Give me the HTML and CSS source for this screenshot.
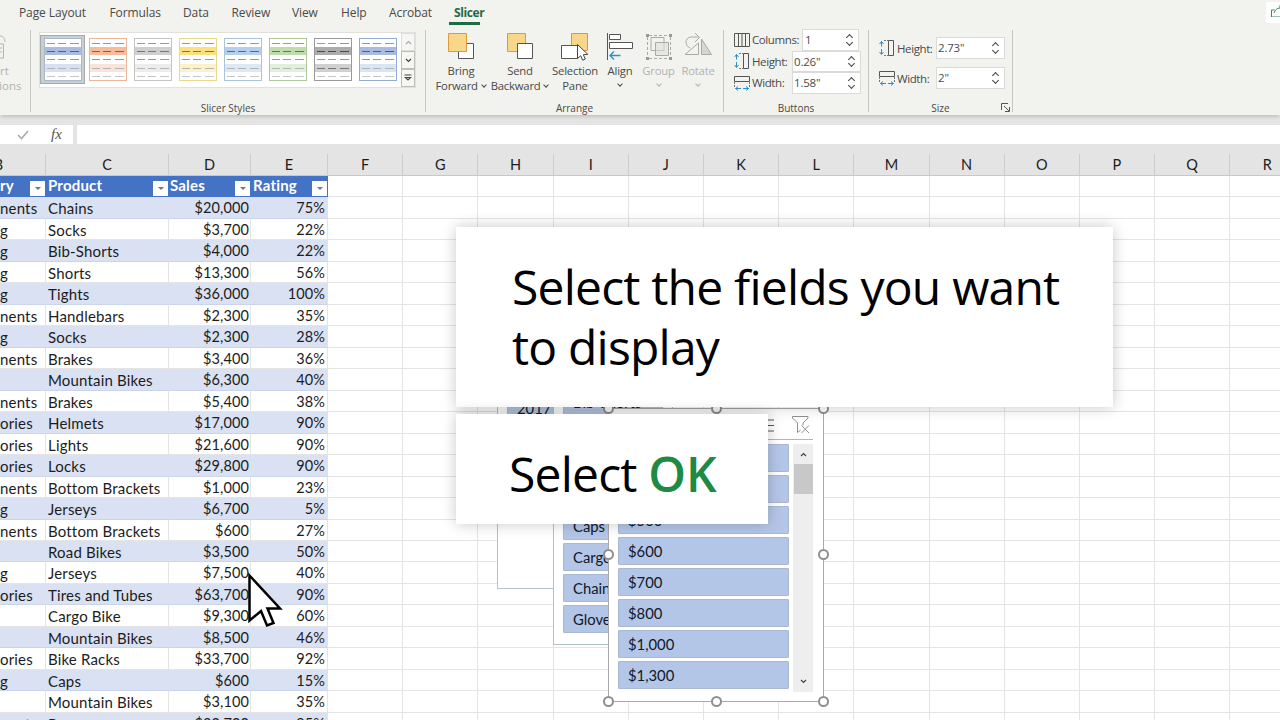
FILE: index.html
```html
<!DOCTYPE html>
<html lang="en">
<head>
  <meta charset="UTF-8" />
  <title>Slicer</title>
  <link rel="stylesheet" href="styles.css">
</head>
<body>
<div class="app">

  <!-- TABS -->
  <nav class="tabs">
    <span>Page Layout</span>
    <span>Formulas</span>
    <span>Data</span>
    <span>Review</span>
    <span>View</span>
    <span>Help</span>
    <span>Acrobat</span>
    <span class="active">Slicer</span>
    <div class="share">
      <svg width="12" height="14" viewBox="0 0 12 14" fill="none" stroke="#3c8565" stroke-width="1"><path d="M3.5 7H.5v7h11M3 10c1-3 3-5 6-5V2.500l3 3"/></svg>
    </div>
  </nav>

  <!-- RIBBON -->
  <div class="ribbon">
    <div class="group group-cut">
      <svg width="6" height="26" viewBox="0 0 6 26" fill="none" stroke="#b3b3b0"><path d="M0 2c3 0 5 2 5 6M0 10h3.500v14H0M0 14h2M0 18h2"/></svg>
      <span>rt</span>
      <span>tions</span>
    </div>

    <div class="group group-styles">
      <div class="gallery">
        <div class="thumbs" id="thumbs"></div>
        <div class="scroll">
          <div class="off"><svg width="7" height="5" viewBox="0 0 7 5"><path d="M1 4l2.500-2.500L6 4"/></svg></div>
          <div><svg width="7" height="5" viewBox="0 0 7 5"><path d="M1 1l2.500 2.500L6 1"/></svg></div>
          <div><svg width="8" height="8" viewBox="0 0 8 8"><path d="M.5 1h7M1.500 3.500L4 6l2.500-2.500z"/></svg></div>
        </div>
      </div>
      <div class="label">Slicer Styles</div>
    </div>

    <div class="group group-arrange">
      <div class="tools">
        <div class="tool">
          <svg width="30" height="30" viewBox="0 0 30 30"><path d="M12.500 11.500h15v15h-15z" fill="#fff" stroke="#555"/><path d="M2.500 1.500h18v18h-18z" fill="#f8d68a" stroke="#dc9a3c"/></svg>
          <span>Bring</span>
          <span>Forward <i class="caret"></i></span>
        </div>
        <div class="tool">
          <svg width="30" height="30" viewBox="0 0 30 30"><path d="M2.500 1.500h18v18h-18z" fill="#f8d68a" stroke="#dc9a3c"/><path d="M12.500 11.500h15v15h-15z" fill="#fff" stroke="#555"/></svg>
          <span>Send</span>
          <span>Backward <i class="caret"></i></span>
        </div>
        <div class="tool">
          <svg width="30" height="30" viewBox="0 0 30 30"><path d="M11.500 1.500h16v17h-16z" fill="#f8d68a" stroke="#dc9a3c"/><path d="M1.500 13.500h16v13h-16z" fill="#fff" stroke="#555"/><path d="M17.500 12.500v14l3.200-2.800 2 4.500 2.600-1.200-2-4.300 4.500-.4z" fill="#fff" stroke="#444"/></svg>
          <span>Selection</span>
          <span>Pane</span>
        </div>
        <div class="tool">
          <svg width="30" height="30" viewBox="0 0 30 30" fill="none" stroke="#555"><path d="M2.500 1v27"/><path d="M4.500 2.500h11v5h-11zM4.500 10.500h23v6h-23z" fill="#fff"/><path d="M15.500 23.500H5M9 19.500l-4 4 4 4" stroke="#2f8fc8" stroke-width="1.300"/></svg>
          <span>Align</span>
          <i class="caret"></i>
        </div>
        <div class="tool off">
          <svg width="30" height="30" viewBox="0 0 30 30" fill="none" stroke="#a9a9a9"><path d="M5 3.500h20M5 26.500h20M3.500 5v20M26.500 5v20" stroke-dasharray="3 2"/><path d="M7 5.500h13v13H7z"/><path d="M11.500 10.500h13v13h-13z" fill="#dededc" fill-opacity=".6"/><path d="M2 2h3v3H2zM25 2h3v3h-3zM2 25h3v3H2zM25 25h3v3h-3z" fill="#999" stroke="none"/></svg>
          <span>Group</span>
          <i class="caret"></i>
        </div>
        <div class="tool off">
          <svg width="30" height="30" viewBox="0 0 30 30" fill="none" stroke="#a9a9a9"><path d="M7 16C2 14 1 6 8 5h8M12 1l4.500 4.500L12 10"/><path d="M2 22.500L15.500 11v11.500z"/><path d="M18.500 7v15.500h10z" fill="#d6d6d4"/></svg>
          <span>Rotate</span>
          <i class="caret"></i>
        </div>
      </div>
      <div class="label">Arrange</div>
    </div>

    <div class="group group-buttons">
      <div class="field">
        <svg width="16" height="14" viewBox="0 0 16 14" fill="none" stroke="#555"><path d="M.5.5h15v13H.5zM4.500.5v13M8 .5v13M11.500.5v13"/></svg>
        <label>Columns:</label><div class="spin narrow">1<b></b></div>
      </div>
      <div class="field">
        <svg width="16" height="16" viewBox="0 0 16 16" fill="none"><path d="M9.500.5h5v15h-5z" stroke="#555"/><path d="M5 .5h5M5 15.500h5" stroke="#777" stroke-dasharray="2 1"/><path d="M2.500 1.500v5M.5 4l2-2.500 2 2.500M2.500 9v5M.5 12l2 2.500 2-2.500" stroke="#2f8fc8"/></svg>
        <label>Height:</label><div class="spin">0.26"<b></b></div>
      </div>
      <div class="field">
        <svg width="16" height="16" viewBox="0 0 16 16" fill="none"><path d="M.5 1.500h15v5H.5z" stroke="#555"/><path d="M.5 7v5M15.500 7v5" stroke="#777" stroke-dasharray="2 1"/><path d="M1.500 13.500H7M4 11.500l-2.500 2L4 15.500M9 13.500h5.500M12 11.500l2.500 2-2.500 2" stroke="#2f8fc8"/></svg>
        <label>Width:</label><div class="spin">1.58"<b></b></div>
      </div>
      <div class="label">Buttons</div>
    </div>

    <div class="group group-size">
      <div class="field">
        <svg width="16" height="16" viewBox="0 0 16 16" fill="none"><path d="M9.500.5h5v15h-5z" stroke="#555"/><path d="M5 .5h5M5 15.500h5" stroke="#777" stroke-dasharray="2 1"/><path d="M2.500 1.500v5M.5 4l2-2.500 2 2.500M2.500 9v5M.5 12l2 2.500 2-2.500" stroke="#2f8fc8"/></svg>
        <label>Height:</label><div class="spin">2.73"<b></b></div>
      </div>
      <div class="field">
        <svg width="16" height="16" viewBox="0 0 16 16" fill="none"><path d="M.5 1.500h15v5H.5z" stroke="#555"/><path d="M.5 7v5M15.500 7v5" stroke="#777" stroke-dasharray="2 1"/><path d="M1.500 13.500H7M4 11.500l-2.500 2L4 15.500M9 13.500h5.500M12 11.500l2.500 2-2.500 2" stroke="#2f8fc8"/></svg>
        <label>Width:</label><div class="spin">2"<b></b></div>
      </div>
      <div class="label">Size</div>
      <svg class="launcher" width="9" height="9" viewBox="0 0 9 9" fill="none" stroke="#555"><path d="M.5 7V.5H7M3 3l5 5M8.500 4v4.500H4"/></svg>
    </div>
  </div>

  <!-- FORMULA BAR -->
  <div class="formula">
    <div class="formula-tools">
      <svg width="12" height="10" viewBox="0 0 12 10" fill="none" stroke="#aaa" stroke-width="1.600"><path d="M1 5l3.500 3.500L11 1"/></svg>
      <span class="fx">fx</span>
    </div>
    <div class="formula-input"></div>
  </div>

  <!-- SHEET -->
  <div class="sheet">
    <div class="row letters" id="letters"></div>
    <div id="rows"></div>
  </div>

  <!-- SLICERS -->
  <div class="slicer slicer-year">
    <div class="item">2017</div>
  </div>
  <div class="slicer slicer-product">
    <div class="item">Bib-Shorts</div>
    <div class="item"></div>
    <div class="item"></div>
    <div class="item"></div>
    <div class="item">Caps</div>
    <div class="item">Cargo Bike</div>
    <div class="item">Chains</div>
    <div class="item">Gloves</div>
  </div>
  <div class="slicer slicer-sales">
    <div class="slicer-head">
      <svg width="14" height="14" viewBox="0 0 14 14" fill="none" stroke="#555" stroke-width="1.200"><path d="M0 2h13M0 7.500h13M0 13h13"/></svg>
      <svg width="18" height="18" viewBox="0 0 18 18" fill="none" stroke="#909090"><path d="M11 9.500V7l5-5V.5H.5V2l5 5v9.500l3-2.500"/><path d="M9.500 9.500l7.500 7.500M17 9.500L9.500 17"/></svg>
    </div>
    <div class="slicer-body">
      <div class="items">
        <div class="item"></div>
        <div class="item"></div>
        <div class="item">$500</div>
        <div class="item">$600</div>
        <div class="item">$700</div>
        <div class="item">$800</div>
        <div class="item">$1,000</div>
        <div class="item">$1,300</div>
      </div>
      <div class="scrollbar">
        <svg width="7" height="5" viewBox="0 0 7 5"><path d="M1 4l2.500-2.500L6 4"/></svg>
        <div class="thumb"></div>
        <svg width="7" height="5" viewBox="0 0 7 5"><path d="M1 1l2.500 2.500L6 1"/></svg>
      </div>
    </div>
    <i class="handle top left"></i><i class="handle top center"></i><i class="handle top right"></i>
    <i class="handle middle left"></i><i class="handle middle right"></i>
    <i class="handle bottom left"></i><i class="handle bottom center"></i><i class="handle bottom right"></i>
  </div>

  <!-- CALLOUTS -->
  <div class="callout callout-fields">Select the fields you want<br>to display</div>
  <div class="callout callout-ok">Select <strong>OK</strong></div>

  <svg class="cursor" width="36" height="56" viewBox="0 0 36 56"><path d="M2.500 3.500L33 36.500H20.500l6 14.500-6.500 2.500-6-14.500L2.500 48.500z" fill="#fff" stroke="#000" stroke-width="2.500"/></svg>
</div>

<script>
  const styles = ["blue", "orange", "gray", "yellow", "sky", "green", "dark", "navy"];
  document.getElementById("thumbs").innerHTML = styles.map((name, i) => `
    <div class="thumb-box ${i === 0 ? "selected" : ""}">
      <div class="mini ${name}"><i></i><i></i><i></i><i></i><i></i></div>
    </div>`).join("");

  const letters = ["B", "C", "D", "E", "F", "G", "H", "I", "J", "K", "L", "M", "N", "O", "P", "Q", "R"];
  document.getElementById("letters").innerHTML = letters.map(l => `<div>${l}</div>`).join("");

  const data = [
    ["Components", "Chains", "$20,000", "75%"],
    ["Clothing", "Socks", "$3,700", "22%"],
    ["Clothing", "Bib-Shorts", "$4,000", "22%"],
    ["Clothing", "Shorts", "$13,300", "56%"],
    ["Clothing", "Tights", "$36,000", "100%"],
    ["Components", "Handlebars", "$2,300", "35%"],
    ["Clothing", "Socks", "$2,300", "28%"],
    ["Components", "Brakes", "$3,400", "36%"],
    ["Bikes", "Mountain Bikes", "$6,300", "40%"],
    ["Components", "Brakes", "$5,400", "38%"],
    ["Accessories", "Helmets", "$17,000", "90%"],
    ["Accessories", "Lights", "$21,600", "90%"],
    ["Accessories", "Locks", "$29,800", "90%"],
    ["Components", "Bottom Brackets", "$1,000", "23%"],
    ["Clothing", "Jerseys", "$6,700", "5%"],
    ["Components", "Bottom Brackets", "$600", "27%"],
    ["Bikes", "Road Bikes", "$3,500", "50%"],
    ["Clothing", "Jerseys", "$7,500", "40%"],
    ["Accessories", "Tires and Tubes", "$63,700", "90%"],
    ["Bikes", "Cargo Bike", "$9,300", "60%"],
    ["Bikes", "Mountain Bikes", "$8,500", "46%"],
    ["Accessories", "Bike Racks", "$33,700", "92%"],
    ["Clothing", "Caps", "$600", "15%"],
    ["Bikes", "Mountain Bikes", "$3,100", "35%"],
    ["Components", "Pumps", "$30,700", "95%"]
  ];

  // how much of each category is left of the visible area
  const tails = { Components: "nents", Clothing: "g", Accessories: "ories", Bikes: "" };
  const empty = "<div></div>".repeat(13);

  const head = ["ry", "Product", "Sales", "Rating"]
    .map(t => `<div class="th">${t}<span class="filter"></span></div>`).join("");
  document.getElementById("rows").innerHTML = `<div class="row">${head}${empty}</div>` +
    data.map((r, i) => `
      <div class="row ${i % 2 ? "" : "band"}">
        <div class="td">${tails[r[0]]}</div>
        <div class="td">${r[1]}</div>
        <div class="td num">${r[2]}</div>
        <div class="td num">${r[3]}</div>
        ${empty}
      </div>`).join("");
</script>
</body>
</html>
```
FILE: styles.css
```css
* { box-sizing: border-box; }
body {
  margin: 0;
  font-family: "Open Sans", "Noto Sans", sans-serif;
  color: #4a4a48;
}
.app {
  position: relative;
  width: 1280px;
  height: 720px;
  overflow: hidden;
  background: #e4e4e4;
}

/* tabs */
.tabs {
  display: grid;
  grid-template-columns: 90.5px 73.5px 48.5px 60.5px 49px 48px 66px 1fr 14px;
  height: 28px;
  padding-left: 19px;
  background: #f2f2ee;
  font-size: 12px;
  line-height: 26px;
  letter-spacing: -0.1px;
  white-space: nowrap;
}
.tabs .active {
  justify-self: start;
  height: 25px;
  width: 36px;
  margin-left: -6px;
  padding-left: 5px;
  color: #1e6b45;
  font-weight: 700;
  letter-spacing: -0.4px;
  background: linear-gradient(#1e6b45, #1e6b45) 0 22px / 31px 3px no-repeat;
}
.share {
  height: 21px;
  margin-top: 2px;
  padding: 1px 0 0 5px;
  background: #fff;
  line-height: 0;
}

/* ribbon */
.ribbon {
  display: flex;
  height: 87px;
  padding-top: 2px;
  background: #f2f2ee;
  box-shadow: 0 3px 3px -1px #c2c2bd;
}
.group {
  position: relative;
  height: 82px;
  border-right: 1px solid #c6c6c2;
}
.label {
  position: absolute;
  left: 0;
  right: 0;
  bottom: -3px;
  font-size: 10px;
  line-height: 14px;
  text-align: center;
}
.group-cut {
  display: flex;
  flex-direction: column;
  width: 31px;
  padding-top: 4px;
  font-size: 11.5px;
  line-height: 15px;
  color: #b2b2af;
  overflow: hidden;
}
.group-cut svg { margin-bottom: 3px; flex: none; }
.group-cut span:last-child { margin-left: -5px; }
.group-styles { width: 395px; padding: 2px 0 0 8px; }
.gallery {
  display: flex;
  width: 377px;
  height: 56px;
  background: #fff;
  border: 1px solid #e0e0dc;
}
.thumbs { display: flex; flex: 1; padding-top: 2px; }
.thumb-box { width: 45px; height: 49px; padding: 2px 3px; border: 1px solid transparent; }
.thumb-box.selected { background: #c9cfcf; border-color: #a4aaaa; }
.mini {
  --band: #a9bce0;
  --light: #d8e0f2;
  --line: #aab8cc;
  --ink: #4d6286;
  --dash: #999;
  display: grid;
  grid-template-rows: repeat(5, 1fr);
  width: 38px;
  height: 43px;
  background: #fff;
  border: 1px solid var(--line);
}
.mini i {
  background-image: linear-gradient(90deg, var(--dash) 8px, transparent 8px, transparent 11px, var(--dash) 11px, var(--dash) 19px, transparent 19px, transparent 23px, var(--dash) 23px, var(--dash) 32px, transparent 32px);
  background-size: 36px 1px;
  background-position: 2px 4px;
  background-repeat: no-repeat;
}
.mini i:nth-child(2) { --dash: var(--ink); background-color: var(--band); }
.mini i:nth-child(4) { --dash: #b3b6b8; background-color: var(--light); }
.mini i:nth-child(5) { --dash: #c4c8c6; }
.mini.orange { --band: #f5bb9b; --light: #fae3d8; --line: #eab79c; --ink: #9c5838; }
.mini.gray { --band: #cfcfcf; --light: #ececec; --line: #c4c4c4; --ink: #777; }
.mini.yellow { --band: #fae07e; --light: #fdf2c6; --line: #ead98c; --ink: #88752e; }
.mini.sky { --band: #b4d0ec; --light: #dce9f5; --line: #a9c3db; --ink: #496d93; }
.mini.green { --band: #c0dcab; --light: #e2efda; --line: #adc99a; --ink: #5c8044; }
.mini.dark { --band: #acacac; --light: #d0d0d0; --line: #999; --ink: #4a4a4a; }
.mini.dark i:nth-child(4) { --dash: #777; }
.mini.navy { --band: #a9bce0; --light: #d8e6f3; --line: #92add2; --ink: #425f91; }
.scroll { display: grid; grid-template-rows: 18px 18px 18px; width: 14px; }
.scroll div {
  display: flex;
  align-items: center;
  justify-content: center;
  background: #f6f6f3;
  border: 1px solid #bdbdb9;
}
.scroll svg, .scrollbar svg { fill: none; stroke: #444; stroke-width: 1.2; flex: none; }
.scroll .off svg { stroke: #aaa; }
.scroll .off { border-color: #ddd; }

.group-arrange { width: 298px; }
.tools {
  display: grid;
  grid-template-columns: 64px 54px 56px 34px 43px 36px;
  margin-left: 3px;
}
.tool {
  display: flex;
  flex-direction: column;
  align-items: center;
  padding-top: 2px;
  font-size: 11.3px;
  line-height: 15px;
  letter-spacing: -0.2px;
  white-space: nowrap;
}
.tool svg { margin-bottom: 1px; flex: none; }
.tool.off { color: #b2b2af; }
.tool > .caret { margin-top: 4px; }
.caret {
  display: inline-block;
  width: 4px;
  height: 4px;
  margin: 0 1px 3px 1px;
  border: solid currentColor;
  border-width: 0 1.3px 1.3px 0;
  transform: rotate(45deg);
}
.group-buttons { width: 145px; padding: 0 0 0 10px; }
.group-buttons .field:first-child { margin-top: -1px; }
.group-size { width: 144px; padding: 7px 0 0 10px; }
.field { display: flex; align-items: center; height: 21.5px; font-size: 11.5px; letter-spacing: -0.4px; }
.field svg { margin-right: 2px; flex: none; }
.field label { white-space: nowrap; }
.group-size .field { height: 22px; margin-bottom: 8px; }
.spin {
  position: relative;
  flex: none;
  width: 69px;
  height: 21.5px;
  margin-left: auto;
  margin-right: 7px;
  padding-left: 1px;
  background: #fff;
  border: 1px solid #dadad6;
  line-height: 19px;
  letter-spacing: -0.2px;
}
.spin.narrow { width: 57px; margin-right: 9px; padding-left: 2px; }
.spin b::before, .spin b::after {
  content: "";
  position: absolute;
  right: 6px;
  width: 4px;
  height: 4px;
  border: solid #444;
}
.spin b::before { top: 5px; border-width: 1.3px 0 0 1.3px; transform: rotate(45deg); }
.spin b::after { bottom: 5px; border-width: 0 1.3px 1.3px 0; transform: rotate(45deg); }
.launcher { position: absolute; right: 2px; bottom: 0; }

/* formula bar */
.formula { display: flex; gap: 4px; height: 19px; margin-top: 10px; }
.formula-tools {
  display: flex;
  align-items: center;
  gap: 22px;
  width: 73px;
  padding-left: 17px;
  background: #fff;
}
.fx { font: italic 15px "Liberation Serif", serif; color: #555; }
.formula-input { flex: 1; background: #fff; }

/* sheet */
.sheet {
  font-family: Lato, sans-serif;
  font-size: 15px;
  letter-spacing: 0.18px;
  color: #1c1c1c;
  background: #fff;
}
.row {
  display: grid;
  grid-template-columns: 46px 123px 82px 77px repeat(13, 75.2px);
  grid-template-rows: 100%;
  height: 21.48px;
}
.row > div {
  border-right: 1px solid #e4e4e4;
  border-bottom: 1px solid #e4e4e4;
  white-space: nowrap;
}
.row.letters { height: 32px; background: #e4e4e4; font-size: 14.5px; letter-spacing: 0; }
.row.letters > div {
  padding-top: 10px;
  border-right-color: transparent;
  border-bottom-color: #c8c8c8;
  background: linear-gradient(#cdcdcd, #cdcdcd) 100% 100% / 1px 22px no-repeat;
  background-origin: border-box;
  text-align: center;
  line-height: 21px;
}
.row.letters > div:first-child { text-indent: -48px; }
.row > .th {
  display: flex;
  justify-content: space-between;
  align-items: flex-end;
  padding-left: 2px;
  border-color: #4472c4;
  background: #4472c4;
  color: #fff;
  font-weight: 700;
  line-height: 21px;
}
.row > .th:first-child, .row > .td:first-child { padding-left: 0; }
.row > .th:nth-child(3) { padding-left: 1px; }
.filter {
  width: 15px;
  height: 15px;
  background: #fff;
}
.filter::before {
  content: "";
  display: block;
  width: 0;
  margin: 6px auto 0;
  border: 3.5px solid transparent;
  border-top-color: #777;
  border-bottom: 0;
}
.row > .td { padding: 0 2px; line-height: 22px; }
.row > .td.num { padding-right: 1px; text-align: right; font-size: 14.5px; letter-spacing: 0.1px; }
.row > .td.num:nth-child(4) { padding-right: 2px; }
.row.band > .td { background: #d9e1f2; border-color: #d9e1f2; border-bottom-color: #c9d5ec; }

/* slicers */
.slicer {
  position: absolute;
  background: #fff;
  border: 1px solid #b4c2cc;
  font-family: Lato, sans-serif;
  font-size: 14.8px;
  color: #10182a;
}
.item {
  height: 28px;
  margin-bottom: 3px;
  padding-left: 9px;
  border: 1px solid #a9b8d3;
  border-radius: 1px;
  background: #b4c6e7;
  line-height: 27px;
  white-space: nowrap;
  overflow: hidden;
}
.slicer-year { left: 497px; top: 360px; width: 100px; height: 229px; padding: 33px 0 0 9px; }
.slicer-product { left: 553px; top: 360px; width: 120px; height: 285px; padding: 27px 9px 0; }
.slicer-sales { left: 608px; top: 408px; width: 216px; height: 294px; padding: 6px 10px 0 9px; border-color: #a9a9a9; }
.slicer-head {
  display: flex;
  justify-content: flex-end;
  gap: 17px;
  height: 25px;
  padding: 1px 3px 0 0;
  border-bottom: 1px solid #b5b5b5;
}
.slicer-head svg:first-child { margin-top: 2px; }
.slicer-body { display: flex; justify-content: space-between; padding-top: 4px; }
.items { width: 171px; }
.scrollbar {
  display: flex;
  flex-direction: column;
  align-items: center;
  width: 20px;
  height: 248px;
  padding: 8px 0;
  background: #eee;
}
.scrollbar .thumb { width: 19px; height: 30px; margin: 7px 0 auto; background: #c8c8c8; }
.handle {
  position: absolute;
  width: 11px;
  height: 11px;
  border: 2px solid #8f8f8f;
  border-radius: 50%;
  background: #fff;
}
.handle.top { top: -6px; }
.handle.middle { top: 140px; }
.handle.bottom { bottom: -6px; }
.handle.left { left: -6px; }
.handle.center { left: 102px; }
.handle.right { right: -6px; }

/* callouts */
.callout {
  position: absolute;
  left: 456px;
  background: #fff;
  box-shadow: 0 0 14px rgba(0,0,0,.22);
  color: #000;
  font-size: 48px;
  line-height: 60px;
  letter-spacing: -0.8px;
  white-space: nowrap;
}
.callout-fields { top: 227px; width: 657px; height: 180px; padding: 30px 0 0 56px; }
.callout-ok { top: 414px; width: 312px; height: 110px; padding: 30px 0 0 53px; }
.callout strong { color: #1e8a44; font-weight: 600; letter-spacing: 0; }
.cursor { position: absolute; left: 247px; top: 572px; }
```
